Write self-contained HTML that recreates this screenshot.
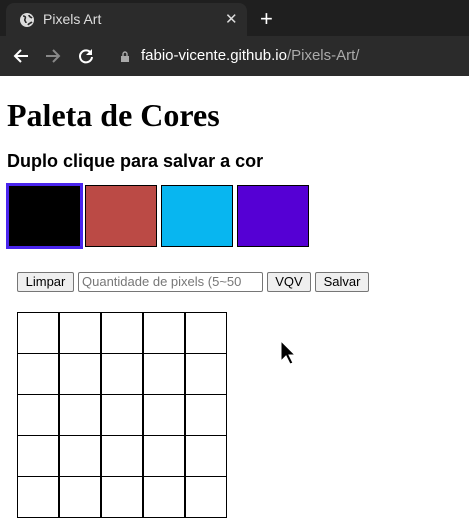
<!DOCTYPE html>
<html><head><style>
body{margin:0;width:469px;height:523px;overflow:hidden;background:#fff;font-family:"Liberation Sans",sans-serif;position:relative}
.top{position:absolute;left:0;top:0;width:469px;height:37px;background:#1f1f1f}
.tab{position:absolute;left:6px;top:3px;width:241px;height:34px;background:#2b2b2b;border-radius:8px 8px 0 0;color:#ddd;font-size:14px}
.tb{position:absolute;left:0;top:36px;width:469px;height:40px;background:#2b2b2b}
.abs{position:absolute}
h1{position:absolute;left:7px;top:97px;margin:0;font:bold 32px "Liberation Serif",serif;color:#000}
h3{position:absolute;left:7px;top:151px;margin:0;font:bold 18px "Liberation Sans",sans-serif}
.c{position:absolute;border:1px solid #000;box-sizing:border-box}
.btn{position:absolute;top:272px;height:20px;border:1px solid #767676;border-radius:2px;background:#efefef;font-size:13px;box-sizing:border-box;text-align:center;line-height:18px}
.g{position:absolute;width:42px;height:42px;border:1px solid #000;box-sizing:border-box}
</style></head><body>
<div class="top"></div>
<div class="tab">
<svg class="abs" style="left:13px;top:9px" width="16" height="16" viewBox="0 0 16 16"><circle cx="8" cy="8" r="7" fill="#ddd"/><path d="M4 4c2 0 3 1 2 3s1 2 1 4M10 3c0 2 2 2 3 3M9 13c1-2 3-2 4-3" stroke="#2b2b2b" stroke-width="1.6" fill="none"/></svg>
<span class="abs" style="left:37px;top:8px">Pixels Art</span>
<span class="abs" style="left:219px;top:7px;font-size:15px">✕</span>
</div>
<span class="abs" style="left:260px;top:6px;color:#fff;font-size:22px">+</span>
<div class="tb">
<svg class="abs" style="left:12px;top:11px" width="18" height="18" viewBox="0 0 18 18"><path d="M16 9H3M9 3L3 9l6 6" stroke="#fff" stroke-width="2" fill="none"/></svg>
<svg class="abs" style="left:44px;top:11px" width="18" height="18" viewBox="0 0 18 18"><path d="M2 9h13M9 3l6 6-6 6" stroke="#888" stroke-width="2" fill="none"/></svg>
<svg class="abs" style="left:77px;top:11px" width="18" height="18" viewBox="0 0 18 18"><path d="M14 6A6 6 0 1 0 15 10" stroke="#fff" stroke-width="2" fill="none"/><path d="M15 2v6H9z" fill="#fff"/></svg>
<svg class="abs" style="left:120px;top:15px" width="10" height="12" viewBox="0 0 10 12"><rect x="1" y="5" width="8" height="6" fill="#aaa"/><path d="M3 5V3a2 2 0 0 1 4 0v2" stroke="#aaa" stroke-width="1.4" fill="none"/></svg>
<span class="abs" style="left:141px;top:11px;font-size:15px;color:#fff">fabio-vicente.github.io<span style="color:#aaa">/Pixels-Art/</span></span>
</div>
<h1>Paleta de Cores</h1>
<h3>Duplo clique para salvar a cor</h3>
<div class="c" style="left:6px;top:183px;width:77px;height:66px;background:#000;border:3px solid #4a25ee"></div>
<div class="c" style="left:85px;top:185px;width:72px;height:62px;background:#bb4a45"></div>
<div class="c" style="left:161px;top:185px;width:72px;height:62px;background:#08b6f0"></div>
<div class="c" style="left:237px;top:185px;width:72px;height:62px;background:#5500d4"></div>
<div class="btn" style="left:17px;width:57px">Limpar</div>
<div class="abs" style="left:78px;top:272px;width:185px;height:20px;border:1px solid #767676;border-radius:2px;box-sizing:border-box;font-size:13px;color:#777;line-height:18px;padding-left:3px;overflow:hidden;white-space:nowrap">Quantidade de pixels (5~50</div>
<div class="btn" style="left:267px;width:44px">VQV</div>
<div class="btn" style="left:315px;width:54px">Salvar</div>
<div id="grid"></div>
<div class="g" style="left:17px;top:312px"></div><div class="g" style="left:59px;top:312px"></div><div class="g" style="left:101px;top:312px"></div><div class="g" style="left:143px;top:312px"></div><div class="g" style="left:185px;top:312px"></div>
<div class="g" style="left:17px;top:353px"></div><div class="g" style="left:59px;top:353px"></div><div class="g" style="left:101px;top:353px"></div><div class="g" style="left:143px;top:353px"></div><div class="g" style="left:185px;top:353px"></div>
<div class="g" style="left:17px;top:394px"></div><div class="g" style="left:59px;top:394px"></div><div class="g" style="left:101px;top:394px"></div><div class="g" style="left:143px;top:394px"></div><div class="g" style="left:185px;top:394px"></div>
<div class="g" style="left:17px;top:435px"></div><div class="g" style="left:59px;top:435px"></div><div class="g" style="left:101px;top:435px"></div><div class="g" style="left:143px;top:435px"></div><div class="g" style="left:185px;top:435px"></div>
<div class="g" style="left:17px;top:476px"></div><div class="g" style="left:59px;top:476px"></div><div class="g" style="left:101px;top:476px"></div><div class="g" style="left:143px;top:476px"></div><div class="g" style="left:185px;top:476px"></div>
<svg class="abs" style="left:280px;top:340px" width="16" height="26" viewBox="0 0 16 26"><path d="M1 1v20l5-5 4 8 3-1-4-8h6z" fill="#000" stroke="#fff" stroke-width="1"/></svg>
</body></html>
